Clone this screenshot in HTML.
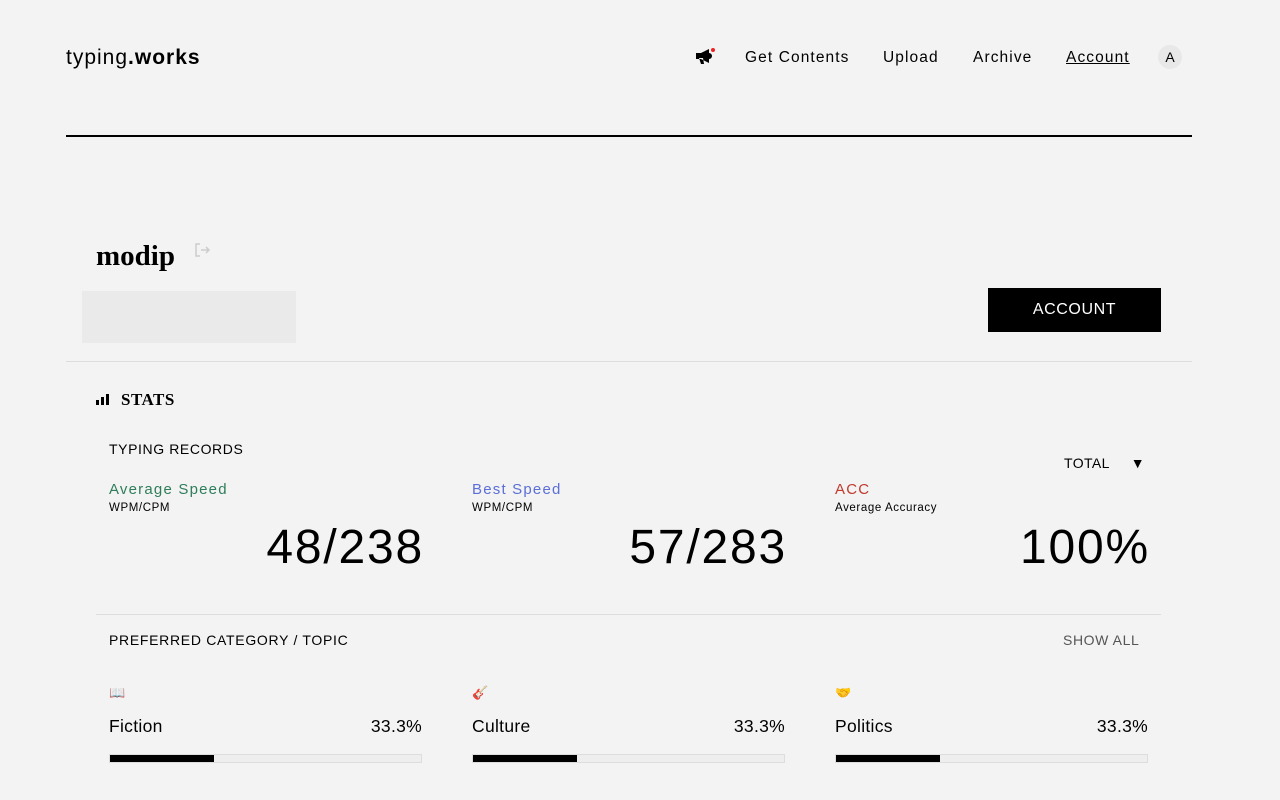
<!DOCTYPE html><html><head><meta charset="utf-8"><style>
*{margin:0;padding:0;box-sizing:border-box}
body{width:1280px;height:800px;background:#f3f3f3;font-family:"Liberation Sans",sans-serif;color:#000;position:relative;overflow:hidden}
.a{position:absolute;white-space:nowrap}
.nav{font-size:15.5px;letter-spacing:1.1px;top:49px}
.col{position:absolute;width:313px}
.lbl{font-size:15px;letter-spacing:1.2px}
.sub{font-size:11.5px;margin-top:4px;letter-spacing:.6px}
.num{font-size:48px;text-align:right;margin-top:6px;letter-spacing:1.8px;margin-right:-2px}
.bar{position:absolute;height:9px;width:313px;border:1px solid #ddd;background:#eee}
.bar div{height:100%;width:33.3%;background:#000}
</style></head><body>
<div class="a" style="left:66px;top:46px;font-size:21px;letter-spacing:1px">typing<b>.works</b></div>
<svg class="a" style="left:695px;top:47px" width="22" height="20" viewBox="0 0 22 20"><path d="M1 6h5l8-4v14l-8-4H1z M4 11l2 6h3l-1-6" fill="#000"/><path d="M14 6a3 3 0 0 1 0 6z" fill="#000"/><circle cx="18" cy="3" r="2" fill="#e22"/></svg>
<div class="a nav" style="left:745px">Get Contents</div>
<div class="a nav" style="left:883px">Upload</div>
<div class="a nav" style="left:973px">Archive</div>
<div class="a nav" style="left:1066px;text-decoration:underline">Account</div>
<div class="a" style="left:1158px;top:45px;width:24px;height:24px;border-radius:50%;background:#e8e8e8;text-align:center;line-height:24px;font-size:14px">A</div>
<div class="a" style="left:66px;top:135px;width:1126px;height:2px;background:#000"></div>
<div class="a" style="left:96px;top:240px;font-family:'Liberation Serif',serif;font-weight:bold;font-size:29px">modip</div>
<svg class="a" style="left:195px;top:242px" width="16" height="16" viewBox="0 0 16 16" fill="none" stroke="#ccc" stroke-width="1.5"><path d="M5 2H1v12h4M6 8h8M11 5l3 3-3 3"/></svg>
<div class="a" style="left:82px;top:291px;width:214px;height:52px;background:#eaeaea"></div>
<div class="a" style="left:988px;top:288px;width:173px;height:44px;background:#000;color:#fff;font-size:16px;text-align:center;line-height:44px;letter-spacing:.6px">ACCOUNT</div>
<div class="a" style="left:66px;top:361px;width:1126px;height:1px;background:#ddd"></div>
<svg class="a" style="left:96px;top:394px" width="14" height="11"><rect x="0" y="6" width="3" height="5"/><rect x="5" y="3" width="3" height="8"/><rect x="10" y="0" width="3" height="11"/></svg>
<div class="a" style="left:121px;top:390px;font-family:'Liberation Serif',serif;font-weight:bold;font-size:17px;letter-spacing:.5px">STATS</div>
<div class="a" style="left:109px;top:441px;font-size:14px;letter-spacing:.6px">TYPING RECORDS</div>
<div class="a" style="left:1064px;top:455px;font-size:14px;letter-spacing:.4px">TOTAL &nbsp;&nbsp;&nbsp;&nbsp;▼</div>
<div class="col" style="left:109px;top:481px"><div class="lbl" style="color:#2e7d5b">Average Speed</div><div class="sub">WPM/CPM</div><div class="num">48/238</div></div>
<div class="col" style="left:472px;top:481px"><div class="lbl" style="color:#5b6fd6">Best Speed</div><div class="sub">WPM/CPM</div><div class="num">57/283</div></div>
<div class="col" style="left:835px;top:481px"><div class="lbl" style="color:#c0392b">ACC</div><div class="sub">Average Accuracy</div><div class="num">100%</div></div>
<div class="a" style="left:96px;top:614px;width:1065px;height:1px;background:#ddd"></div>
<div class="a" style="left:109px;top:632px;font-size:14px;letter-spacing:.7px">PREFERRED CATEGORY / TOPIC</div>
<div class="a" style="left:1063px;top:632px;font-size:14px;letter-spacing:.6px;color:#555">SHOW ALL</div>
<div class="a" style="left:109px;top:685px;font-size:13px">📖</div>
<div class="a" style="left:472px;top:685px;font-size:13px">🎸</div>
<div class="a" style="left:835px;top:685px;font-size:13px">🤝</div>
<div class="col" style="left:109px;top:716px;font-size:17.5px;letter-spacing:.3px">Fiction<span style="float:right">33.3%</span></div>
<div class="col" style="left:472px;top:716px;font-size:17.5px;letter-spacing:.3px">Culture<span style="float:right">33.3%</span></div>
<div class="col" style="left:835px;top:716px;font-size:17.5px;letter-spacing:.3px">Politics<span style="float:right">33.3%</span></div>
<div class="bar" style="left:109px;top:754px"><div></div></div>
<div class="bar" style="left:472px;top:754px"><div></div></div>
<div class="bar" style="left:835px;top:754px"><div></div></div>
</body></html>
